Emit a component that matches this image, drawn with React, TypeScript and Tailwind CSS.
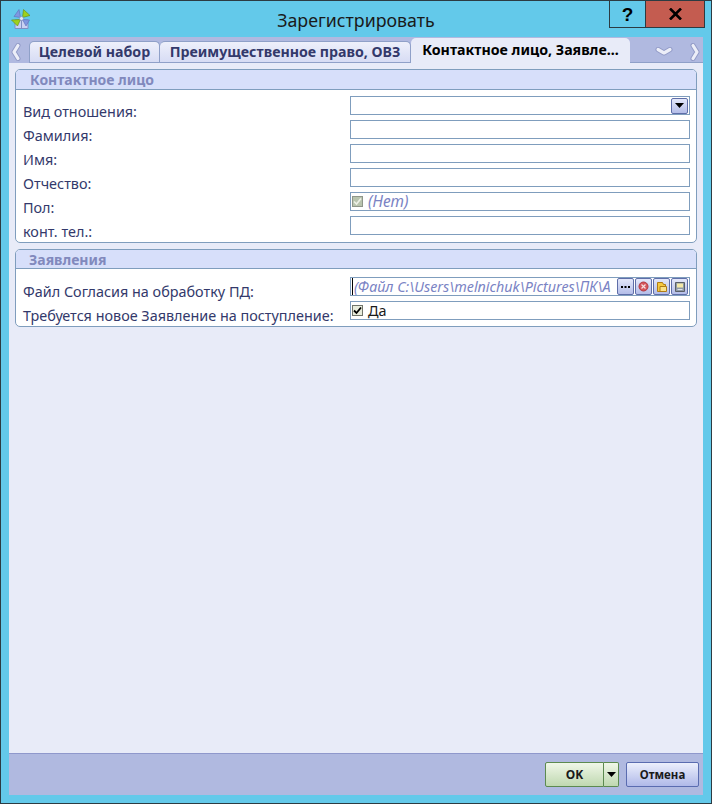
const labelCls = "h-[24px] text-[14.4px] leading-[19px] pt-[6px] text-[#33396b] whitespace-nowrap";
const labelTightCls = "h-[24px] text-[14.4px] leading-[19px] pt-[5px] text-[#33396b] whitespace-nowrap";
const fieldCls = "h-[19px] bg-white border border-[#7f9dbd]";

function AppIcon() {
  return (
    <svg width="22" height="22" viewBox="0 0 22 22" className="block">
      <path d="M5 12h13v8.500H5z" fill="#c9d1f2" stroke="#7f8fc4" />
      <path d="M11.500 12v8.500" stroke="#7f8fc4" />
      <path d="M10.500 9.500L4 8.500 9 1.500z" fill="#7f97e0" stroke="#5a6eb8" strokeWidth="0.6" />
      <path d="M12.500 9.500l1-8 6.500 6z" fill="#9fd01c" stroke="#5f8a10" strokeWidth="0.6" />
      <path d="M10.500 11.500l-9 .5 6 6z" fill="#9fd01c" stroke="#5f8a10" strokeWidth="0.6" />
      <path d="M12.500 11.500l7 .5-3.500 6z" fill="#7f97e0" stroke="#5a6eb8" strokeWidth="0.6" />
      <circle cx="11.500" cy="10.500" r="2" fill="#e4e7f9" stroke="#7f8fc4" strokeWidth="0.7" />
    </svg>
  );
}

function Chevron({ dir }: { dir: "left" | "right" | "down" }) {
  const d =
    dir === "left"
      ? "M8 2.500L4 9l4 6.500"
      : dir === "right"
        ? "M4 2.500L8 9l-4 6.500"
        : "M3 2.500l6 3.500 6-3.500";
  const size = dir === "down" ? { w: 18, h: 9 } : { w: 12, h: 18 };
  return (
    <svg width={size.w} height={size.h} viewBox={`0 0 ${size.w} ${size.h}`} className="block">
      <path d={d} fill="none" stroke="#9099c6" strokeWidth="5" strokeLinejoin="round" strokeLinecap="round" />
      <path d={d} fill="none" stroke="#eceef8" strokeWidth="3.200" strokeLinejoin="round" strokeLinecap="round" />
    </svg>
  );
}

function Triangle() {
  return (
    <svg width="9" height="5" viewBox="0 0 9 5" className="block">
      <path d="M0 0h9L4.500 5z" fill="#000" />
    </svg>
  );
}

function MiniButton({ children }: { children: React.ReactNode }) {
  return (
    <div className="w-[17px] h-[17px] shrink-0 flex items-center justify-center rounded-[2px] border border-[#5f6ea8] bg-gradient-to-b from-[#e4e8fa] to-[#b4bde8]">
      {children}
    </div>
  );
}

function Group({ title, titleCls, heightCls, children }: { title: string; titleCls: string; heightCls: string; children: React.ReactNode }) {
  return (
    <div className={`${heightCls} flex flex-col bg-white border border-[#7f9dbd] rounded-[5px] overflow-hidden`}>
      <div className={`${titleCls} shrink-0 bg-[#d7dffa] border-b border-[#7f9dbd] text-[14px] leading-[20px] font-bold text-[#8189bd]`}>
        {title}
      </div>
      {children}
    </div>
  );
}

export default function App() {
  return (
    <div className="w-[712px] h-[804px] flex flex-col bg-[#63c9ea] border border-[#2c3b42] overflow-hidden font-['Noto_Sans',sans-serif]">
      {/* title bar */}
      <div className="h-[36px] shrink-0 grid grid-cols-[1fr_auto_1fr]">
        <div className="pl-[9px] pt-[7px]">
          <AppIcon />
        </div>
        <div className="text-[17.8px] leading-[24px] pt-[7px] text-[#1a1a1a]">Зарегистрировать</div>
        <div className="flex justify-end pr-[6px]">
          <div className="w-[36px] h-[27px] flex items-center justify-center border-b border-l border-[#2c3b42] text-[19px] leading-none font-bold text-black font-['Liberation_Sans',sans-serif]">
            ?
          </div>
          <div className="w-[60px] h-[27px] flex items-center justify-center border-b border-x border-[#2c3b42] bg-[#c45c50]">
            <svg width="13" height="12" viewBox="0 0 13 12" className="block">
              <path d="M1 0.500l11 11M12 0.500l-11 11" stroke="#000" strokeWidth="2.600" />
            </svg>
          </div>
        </div>
      </div>

      {/* dialog body */}
      <div className="flex-1 min-h-0 mx-[8px] w-[694px] flex flex-col bg-[#e8ebf8]">
        {/* tab strip */}
        <div className="h-[26px] shrink-0 flex bg-[#b0b9e0] text-[14.2px] font-bold leading-[18px]">
          <div className="w-[20px] shrink-0 pl-[1px] pt-[6px]">
            <Chevron dir="left" />
          </div>
          <div className="flex pt-[4px] border-b border-[#8fa0c8] h-[26px]">
            <div className="w-[131px] flex items-center justify-center bg-gradient-to-b from-[#eef0fb] to-[#d7dcf4] border border-b-0 border-[#8fa0c8] rounded-t-[5px] text-[#33396b]">
              Целевой набор
            </div>
            <div className="w-[251px] flex items-center justify-center bg-gradient-to-b from-[#eef0fb] to-[#d7dcf4] border-r border-t border-[#8fa0c8] rounded-t-[5px] text-[#33396b]">
              Преимущественное право, ОВЗ
            </div>
          </div>
          <div className="w-[219px] shrink-0 mt-[1px] h-[26px] flex items-center justify-center pb-[2px] bg-[#e8ebf8] rounded-t-[5px] text-black">
            Контактное лицо, Заявле...
          </div>
          <div className="flex-1 h-[26px] flex items-start justify-end gap-[16px] pr-[2px] pt-[6px] border-b border-[#8fa0c8]">
            <div className="pt-[4px]">
              <Chevron dir="down" />
            </div>
            <Chevron dir="right" />
          </div>
        </div>

        {/* form */}
        <div className="flex-1 min-h-0 flex flex-col gap-[6px] px-[6px] pt-[6px]">
          <Group title="Контактное лицо" titleCls="pl-[14px] h-[20px]" heightCls="h-[174px]">
            <div className="grid grid-cols-[327px_340px] pl-[7px] pt-[6px]">
              <div className={labelCls}>Вид отношения:</div>
              <div className={`${fieldCls} flex justify-end items-center pr-px`}>
                <div className="w-[17px] h-[16px] flex items-center justify-center rounded-[2px] border border-[#5f6ea8] bg-gradient-to-b from-[#e4e8fa] to-[#b4bde8]">
                  <Triangle />
                </div>
              </div>
              <div className={labelCls}>Фамилия:</div>
              <div className={fieldCls} />
              <div className={labelCls}>Имя:</div>
              <div className={fieldCls} />
              <div className={labelCls}>Отчество:</div>
              <div className={fieldCls} />
              <div className={labelCls}>Пол:</div>
              <div className={`${fieldCls} flex items-center pl-[1px] gap-[5px]`}>
                <div className="w-[11px] h-[11px] flex items-center justify-center bg-[#b9c4ae] border border-[#8f968a]">
                  <svg width="9" height="9" viewBox="0 0 9 9" className="block">
                    <path d="M1 4.500l2.500 2.500L8 1.500" fill="none" stroke="#eef1e8" strokeWidth="1.600" />
                  </svg>
                </div>
                <span className="text-[15.5px] leading-[17px] italic text-[#7a83c4]">(Нет)</span>
              </div>
              <div className={labelCls}>конт. тел.:</div>
              <div className={fieldCls} />
            </div>
          </Group>

          <Group title="Заявления" titleCls="pl-[13px] h-[19px]" heightCls="h-[78px]">
            <div className="grid grid-cols-[327px_340px] pl-[7px] pt-[8px]">
              <div className={labelTightCls}>Файл Согласия на обработку ПД:</div>
              <div className={`${fieldCls} flex items-center overflow-hidden`}>
                <div className="flex-1 min-w-0 overflow-hidden whitespace-nowrap text-[14.3px] leading-[17px] italic text-[#7a83c4] pl-[1px] border-l border-black ml-[1px]">
                  (Файл C:\Users\melnichuk\Pictures\ПК\А
                </div>
                <div className="flex gap-[1px] pr-[1px] shrink-0">
                  <MiniButton>
                    <svg width="9" height="2" viewBox="0 0 9 2" className="block">
                      <path d="M0 0h2v2H0zM3.500 0h2v2h-2zM7 0h2v2H7z" fill="#000" />
                    </svg>
                  </MiniButton>
                  <MiniButton>
                    <svg width="11" height="11" viewBox="0 0 11 11" className="block">
                      <circle cx="5.500" cy="5.500" r="4.500" fill="#d4545c" stroke="#b03a44" />
                      <path d="M3.500 3.500l4 4M7.500 3.500l-4 4" stroke="#f6dfe0" strokeWidth="1.200" />
                    </svg>
                  </MiniButton>
                  <MiniButton>
                    <svg width="12" height="12" viewBox="0 0 12 12" className="block">
                      <path d="M1.500 1.500h5l1 2h2v7h-8z" fill="#f5c940" stroke="#b07c14" />
                      <path d="M4 5.500h6.500v5H4z" fill="#fbe38a" stroke="#b07c14" />
                    </svg>
                  </MiniButton>
                  <MiniButton>
                    <svg width="12" height="12" viewBox="0 0 12 12" className="block">
                      <path d="M1.500 1.500h9v9h-9z" fill="#8f9aa8" stroke="#5a5f66" />
                      <path d="M3 2.500h6v4H3z" fill="#f3e9a8" />
                      <path d="M3.500 8.500h5" stroke="#dfe3ea" />
                    </svg>
                  </MiniButton>
                </div>
              </div>
              <div className={labelTightCls}>Требуется новое Заявление на поступление:</div>
              <div className={`${fieldCls} flex items-center pl-[1px] gap-[5px]`}>
                <div className="w-[11px] h-[11px] flex items-center justify-center bg-[#e8ecdc] border border-[#70746a]">
                  <svg width="9" height="9" viewBox="0 0 9 9" className="block">
                    <path d="M1 4.500l2.500 2.500L8 1.500" fill="none" stroke="#000" strokeWidth="1.800" />
                  </svg>
                </div>
                <span className="text-[14.4px] leading-[17px] text-[#1a1a1a]">Да</span>
              </div>
            </div>
          </Group>
        </div>

        {/* footer */}
        <div className="h-[42px] shrink-0 flex items-start justify-end gap-[7px] pt-[8px] pr-[4px] bg-[#b0b9e0] border-t border-[#8f98cc]">
          <div className="flex h-[25px] font-bold text-[12px] text-[#1a1a1a]">
            <div className="w-[59px] flex items-center justify-center rounded-l-[2px] border border-[#5c8a50] bg-gradient-to-b from-[#f0f7e8] to-[#bfd8b0]">
              OK
            </div>
            <div className="w-[15px] flex items-center justify-center rounded-r-[2px] border border-l-0 border-[#5c8a50] bg-gradient-to-b from-[#f0f7e8] to-[#bfd8b0]">
              <Triangle />
            </div>
          </div>
          <div className="w-[73px] h-[25px] flex items-center justify-center rounded-[2px] border border-[#5a6cb0] bg-gradient-to-b from-[#eceffc] to-[#b0b9e8] text-[11.5px] font-bold text-[#1a1a1a]">
            Отмена
          </div>
        </div>
      </div>
      <div className="h-[8px] shrink-0" />
    </div>
  );
}
